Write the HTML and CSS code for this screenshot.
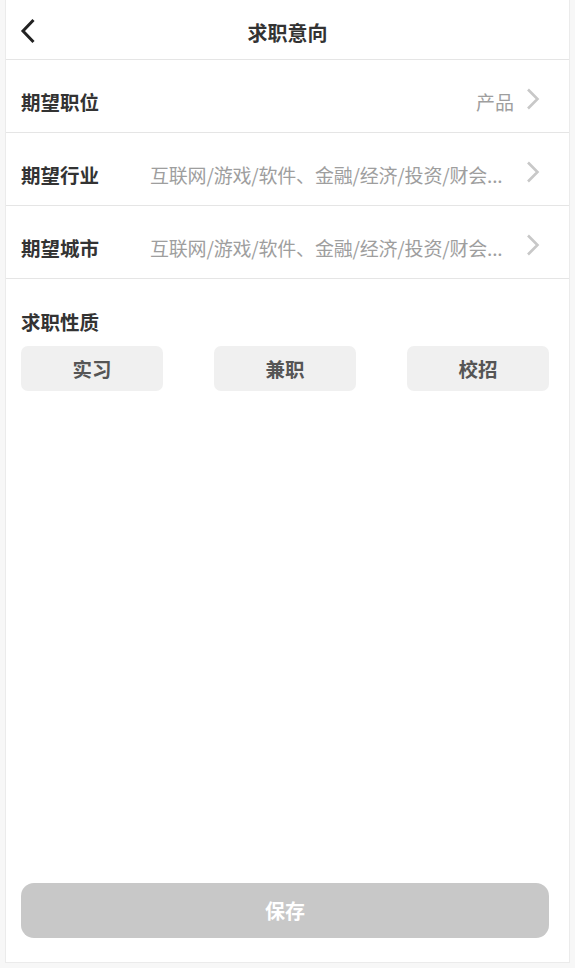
FILE: index.html
```html
<!DOCTYPE html>
<html lang="zh-CN">
<head>
  <meta charset="UTF-8">
  <title>求职意向</title>
  <link rel="stylesheet" href="styles.css">
</head>
<body>
  <div class="page">
    <div class="header">
      <a class="back" href="#">
        <svg width="16" height="26" viewBox="0 0 16 26"><path d="M13.5 2 L3 13 L13.5 24" fill="none" stroke="#222" stroke-width="3"/></svg>
      </a>
      <h1 class="title">求职意向</h1>
    </div>

    <div class="row">
      <span class="label">期望职位</span>
      <span class="value">产品</span>
      <svg class="arrow" width="14" height="22" viewBox="0 0 14 22"><path d="M2 1.5 L11.5 11 L2 20.5" fill="none" stroke="#c8c8c8" stroke-width="2.6"/></svg>
    </div>
    <div class="row">
      <span class="label">期望行业</span>
      <span class="value long">互联网/游戏/软件、金融/经济/投资/财会...</span>
      <svg class="arrow" width="14" height="22" viewBox="0 0 14 22"><path d="M2 1.5 L11.5 11 L2 20.5" fill="none" stroke="#c8c8c8" stroke-width="2.6"/></svg>
    </div>
    <div class="row">
      <span class="label">期望城市</span>
      <span class="value long">互联网/游戏/软件、金融/经济/投资/财会...</span>
      <svg class="arrow" width="14" height="22" viewBox="0 0 14 22"><path d="M2 1.5 L11.5 11 L2 20.5" fill="none" stroke="#c8c8c8" stroke-width="2.6"/></svg>
    </div>

    <div class="section">
      <div class="section-title">求职性质</div>
      <div class="types">
        <button class="type">实习</button>
        <button class="type">兼职</button>
        <button class="type">校招</button>
      </div>
    </div>

    <button class="save">保存</button>
  </div>
</body>
</html>
```

FILE: styles.css
```css
* {
  margin: 0;
  padding: 0;
  box-sizing: border-box;
}
body {
  font-family: "Noto Sans CJK SC", "Noto Sans", sans-serif;
  background: #f7f7f7;
  color: #333;
}
.page {
  margin-left: 5px;
  width: 565px;
  height: 963px;
  background: #fff;
  border: 1px solid #ebebeb;
  border-top: none;
  display: flex;
  flex-direction: column;
}
.header {
  position: relative;
  height: 60px;
  border-bottom: 1px solid #e5e5e5;
  display: flex;
  align-items: center;
  justify-content: center;
  padding-top: 6px;
}
.back {
  position: absolute;
  left: 14px;
  top: 18px;
  display: block;
}
.title {
  font-size: 20px;
  font-weight: bold;
  color: #333;
}
.row {
  height: 73px;
  border-bottom: 1px solid #e5e5e5;
  display: flex;
  align-items: center;
  padding: 10px 29px 0 15px;
}
.label {
  flex-shrink: 0;
  font-size: 19.5px;
  font-weight: bold;
  color: #333;
}
.value {
  flex: 1;
  min-width: 0;
  margin: 0 12px 0 51px;
  font-size: 19px;
  color: #9e9e9e;
  text-align: right;
  white-space: nowrap;
  overflow: hidden;
}
.value.long {
  text-align: left;
  letter-spacing: -0.2px;
}
.arrow {
  flex-shrink: 0;
  margin-top: -4px;
}
.section {
  padding: 30px 20px 0 15px;
}
.section-title {
  font-size: 19.5px;
  font-weight: bold;
  color: #333;
  line-height: 26px;
}
.types {
  display: grid;
  grid-template-columns: 142px 142px 142px;
  justify-content: space-between;
  margin-top: 11px;
}
.type {
  height: 45px;
  border: none;
  border-radius: 7px;
  background: #f0f0f0;
  font-family: inherit;
  font-size: 19.5px;
  font-weight: bold;
  color: #555;
}
.save {
  margin: auto 20px 24px 15px;
  height: 55px;
  border: none;
  border-radius: 13px;
  background: #c8c8c8;
  color: #fff;
  font-family: inherit;
  font-size: 20px;
  font-weight: bold;
}
```
